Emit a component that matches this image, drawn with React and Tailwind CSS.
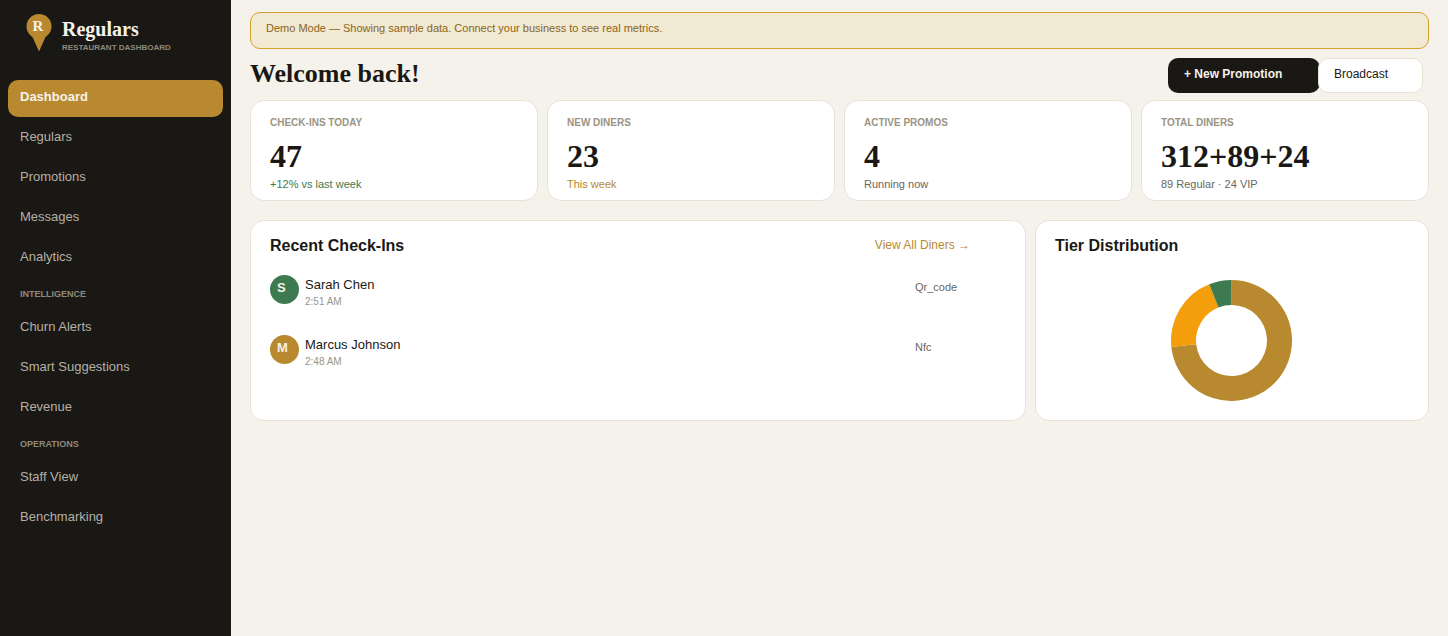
import React from 'react';

const sans = { fontFamily: '"Liberation Sans", Arial, sans-serif' };

const navTop = ['Regulars', 'Promotions', 'Messages', 'Analytics'];
const navIntel = ['Churn Alerts', 'Smart Suggestions', 'Revenue'];
const navOps = ['Staff View', 'Benchmarking'];

const stats = [
  { label: 'CHECK-INS TODAY', value: '47', note: '+12% vs last week', color: 'text-[#3d7a50]' },
  { label: 'NEW DINERS', value: '23', note: 'This week', color: 'text-[#b8892f]' },
  { label: 'ACTIVE PROMOS', value: '4', note: 'Running now', color: 'text-[#6b665c]' },
  { label: 'TOTAL DINERS', value: '312+89+24', note: '89 Regular · 24 VIP', color: 'text-[#6b665c]' },
];

const checkIns = [
  { name: 'Sarah Chen', time: '2:51 AM', method: 'Qr_code', initial: 'S', bg: 'bg-[#3d7a50]' },
  { name: 'Marcus Johnson', time: '2:48 AM', method: 'Nfc', initial: 'M', bg: 'bg-[#b8892f]' },
];

const NavItem = ({ label }) => (
  <a className="flex h-[37px] items-center rounded-[10px] px-3 pb-[4px] text-[13px] text-[#b5b0a6]">{label}</a>
);

const SectionLabel = ({ label }) => (
  <div className="flex h-[33px] items-center px-3 pt-[2px] text-[9px] font-bold text-[#8f8a7e]">{label}</div>
);

const polar = (r, turn) => {
  const a = turn * 2 * Math.PI;
  return [60.5 + r * Math.sin(a), 60.5 - r * Math.cos(a)];
};

const slice = (from, to) => {
  const [x1, y1] = polar(60.5, from);
  const [x2, y2] = polar(60.5, to);
  const [x3, y3] = polar(35.5, to);
  const [x4, y4] = polar(35.5, from);
  const big = to - from > 0.5 ? 1 : 0;
  return `M${x1} ${y1}A60.5 60.5 0 ${big} 1 ${x2} ${y2}L${x3} ${y3}A35.5 35.5 0 ${big} 0 ${x4} ${y4}Z`;
};

const Donut = () => (
  <svg width="121" height="121" viewBox="0 0 121 121">
    <path d={slice(0, 0.733)} fill="#b8892f" />
    <path d={slice(0.733, 0.94)} fill="#f59e0b" />
    <path d={slice(0.94, 1)} fill="#3d7a50" />
  </svg>
);

const Logo = () => (
  <div className="relative h-[38px] w-[26px]">
    <svg width="26" height="38" viewBox="0 0 26 38">
      <path d="M13 0C20 0 25.500 5.500 25.500 12.500C25.500 17 23 20.500 19.500 23L13 37.500L6.500 23C3 20.500 .5 17 .5 12.500C.5 5.500 6 0 13 0Z" fill="#b8892f" />
    </svg>
    <span className="absolute left-[-1px] top-[3px] w-full text-center font-['Liberation_Serif'] text-[15px] leading-[18px] font-bold text-[#f5f2eb]">R</span>
  </div>
);

export default function App() {
  return (
    <div className="flex h-[636px] w-[1448px] overflow-hidden bg-[#f5f2eb]" style={sans}>
      <aside className="w-[231px] shrink-0 bg-[#1a1814] px-2">
        <div className="flex h-[80px] items-start gap-[10px] pl-[18px] pt-[14px]">
          <Logo />
          <div>
            <div className="mt-[3px] font-['Liberation_Serif'] text-[20px] leading-[24px] font-bold text-[#f5f2eb]">Regulars</div>
            <div className="mt-[1px] text-[8px] leading-[11px] font-bold text-[#8f8a7e]">RESTAURANT DASHBOARD</div>
          </div>
        </div>
        <nav className="flex flex-col">
          <a className="flex h-[37px] items-center rounded-[10px] bg-[#b8892f] px-3 pb-[4px] text-[13px] font-bold text-[#f5f2eb]">Dashboard</a>
          <div className="mt-[3px] flex flex-col gap-[3px]">
            {navTop.map((label) => <NavItem key={label} label={label} />)}
          </div>
          <SectionLabel label="INTELLIGENCE" />
          <div className="flex flex-col gap-[3px]">
            {navIntel.map((label) => <NavItem key={label} label={label} />)}
          </div>
          <SectionLabel label="OPERATIONS" />
          <div className="flex flex-col gap-[3px]">
            {navOps.map((label) => <NavItem key={label} label={label} />)}
          </div>
        </nav>
      </aside>

      <main className="flex-1 px-[19px] pt-3">
        <div className="h-[37px] rounded-[10px] border border-[#d4a030] bg-[#f2e9d2] px-[15px] pt-[9px] text-[11px] leading-[13px] text-[#8a6420]">
          Demo Mode — Showing sample data. Connect your business to see real metrics.
        </div>

        <div className="mt-[9px] flex h-[42px] items-start justify-between">
          <h1 className="font-['Liberation_Serif'] text-[26px] leading-[32px] font-bold text-[#1a1814]">Welcome back!</h1>
          <div className="mr-[6px] flex">
            <button className="h-[35px] w-[152px] rounded-[10px] bg-[#1a1814] pb-[4px] pl-4 text-left text-[12px] font-bold text-[#f5f2eb]">+ New Promotion</button>
            <button className="ml-[-2px] h-[35px] w-[105px] rounded-[10px] border border-[#e8e2d4] bg-white pb-[4px] pl-[15px] text-left text-[12px] text-[#1a1814]">Broadcast</button>
          </div>
        </div>

        <div className="grid grid-cols-4 gap-[9px]">
          {stats.map((s) => (
            <div key={s.label} className="h-[101px] rounded-[14px] border border-[#e8e2d4] bg-white px-[19px] pt-[16px]">
              <div className="text-[10px] leading-[12px] font-bold text-[#9a9484]">{s.label}</div>
              <div className="mt-[8px] font-['Liberation_Serif'] text-[32px] leading-[38px] font-bold text-[#1a1814]">{s.value}</div>
              <div className={`mt-[3px] text-[11px] leading-[13px] ${s.color}`}>{s.note}</div>
            </div>
          ))}
        </div>

        <div className="mt-[19px] grid grid-cols-[1fr_394px] gap-[9px]">
          <section className="h-[201px] rounded-[14px] border border-[#e8e2d4] bg-white px-[19px] pt-[15px]">
            <div className="flex h-[19px] items-start">
              <h2 className="text-[16px] leading-[19px] font-bold text-[#1a1814]">Recent Check-Ins</h2>
              <a className="ml-auto mr-[36px] text-[12px] leading-[18px] text-[#b8892f]">View All Diners →</a>
            </div>
            <div className="mt-[20px] flex flex-col gap-[28px]">
              {checkIns.map((c) => (
                <div key={c.name} className="flex h-[32px] items-start">
                  <div className={`h-[29px] w-[29px] shrink-0 rounded-full pl-[7px] pt-[5px] text-[13px] leading-[16px] font-bold text-[#f5f2eb] ${c.bg}`}>{c.initial}</div>
                  <div className="ml-[6px] w-[610px] pt-[1px]">
                    <div className="text-[13px] leading-[18px] text-[#1a1814]">{c.name}</div>
                    <div className="mt-[1px] text-[10px] leading-[13px] text-[#9a9484]">{c.time}</div>
                  </div>
                  <div className="pt-[6px] text-[11px] leading-[13px] text-[#6b665c]">{c.method}</div>
                </div>
              ))}
            </div>
          </section>

          <section className="h-[201px] rounded-[14px] border border-[#e8e2d4] bg-white px-[19px] pt-[15px]">
            <h2 className="text-[16px] leading-[19px] font-bold text-[#1a1814]">Tier Distribution</h2>
            <div className="mt-[25px] flex justify-center pr-[1px]">
              <Donut />
            </div>
          </section>
        </div>
      </main>
    </div>
  );
}
